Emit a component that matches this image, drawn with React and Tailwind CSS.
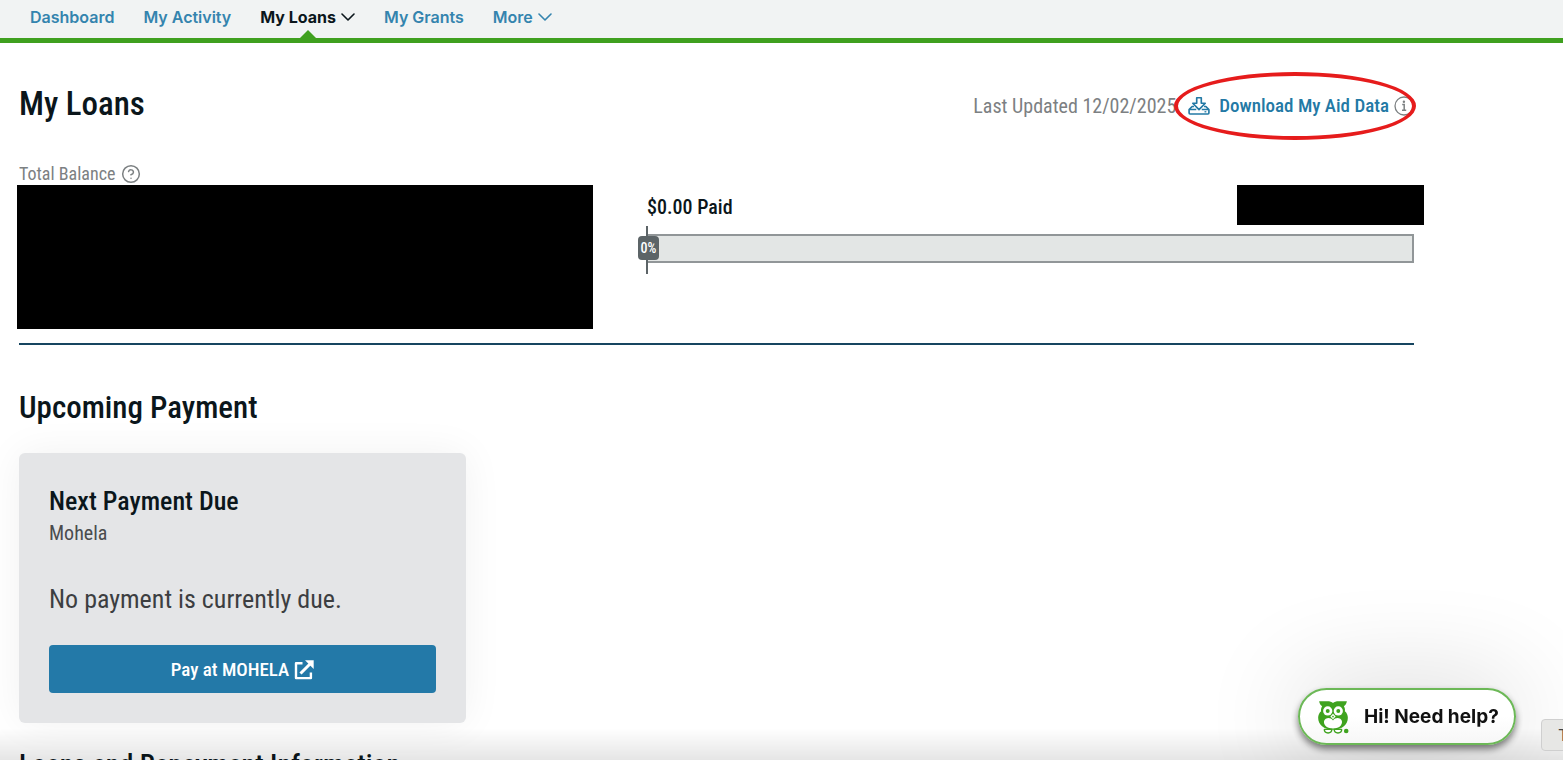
import { CircleHelp } from "lucide-react";
import React from "react";

const navItems = [
  { label: "Dashboard" },
  { label: "My Activity" },
  { label: "My Loans", menu: true, active: true },
  { label: "My Grants" },
  { label: "More", menu: true },
];

const Chevron = () => (
  <svg viewBox="0 0 14 8" className="w-[14px] h-2" fill="none" stroke="currentColor" strokeWidth="1.6" strokeLinecap="round" strokeLinejoin="round" aria-hidden="true">
    <path d="M1 1l6 6 6-6" />
  </svg>
);

const DownloadIcon = () => (
  <svg viewBox="0 0 24 20" className="w-[22px] h-5 shrink-0" fill="none" stroke="currentColor" strokeWidth="1.8" strokeLinejoin="round" aria-hidden="true">
    <path d="M9.5 1h5v6h4.300L12 14 5.200 7h4.300z" />
    <path d="M6.500 10.500H4.500L1.200 14v3.700c0 .6.400 1 1 1h19.600c.6 0 1-.4 1-1V14L19.500 10.500h-2" />
    <path d="M1.500 13.800h7.500M15 13.800h7.500" />
    <path d="M18 16.300h2" strokeWidth="1.400" />
  </svg>
);

const InfoIcon = () => (
  <svg viewBox="0 0 20 20" className="w-5 h-5" fill="none" stroke="currentColor" aria-hidden="true">
    <circle cx="10" cy="10" r="9" strokeWidth="1.300" />
    <path d="M8.200 8.500h2v5.500M8 14.300h4.200" strokeWidth="1.500" />
    <circle cx="9.900" cy="5.800" r="1.200" fill="currentColor" stroke="none" />
  </svg>
);

const ExternalIcon = () => (
  <svg viewBox="0 0 20 20" className="w-5 h-5" fill="none" stroke="currentColor" strokeWidth="2.400" aria-hidden="true">
    <path d="M8.500 3.200H2v14.900h14.900V12.500" strokeLinejoin="round" />
    <path d="M6.500 13.500 16 4" strokeWidth="3" />
    <path d="M11 .3h8.700V9z" fill="currentColor" stroke="none" />
  </svg>
);

const OwlLogo = () => (
  <svg viewBox="0 0 93 100" className="w-[31px] h-[33px] shrink-0" aria-hidden="true">
    <path
      d="M3 1h24c9 0 14 2 18 5 4-3 9-5 18-5h24c-1 7-4 12-9 15 3 5 4 10 3 15 6 5 9 12 9 20 0 21-17 36-45 36S0 72 0 51c0-8 3-15 9-20-1-5 0-10 3-15C7 13 4 8 3 1z"
      fill="#3fa31f"
    />
    <circle cx="29" cy="30" r="14" fill="#fff" />
    <circle cx="61" cy="30" r="14" fill="#fff" />
    <circle cx="29" cy="30" r="6" fill="#3fa31f" />
    <circle cx="61" cy="30" r="6" fill="#3fa31f" />
    <path d="M45 39l8 8-8 8-8-8z" fill="#fff" />
    <path d="M45 44l3 3-3 4-3-4z" fill="#3fa31f" />
    <path d="M45 59c6-8 15-9 22-5 7 5 7 14 1 21-5 6-13 8-23 8s-18-2-23-8c-6-7-6-16 1-21 7-4 16-3 22 5z" fill="#fff" />
    <path d="M19 86h22c1 7-4 11-11 11s-12-4-11-11zM49 86h22c1 7-4 11-11 11s-12-4-11-11z" fill="#fff" stroke="#3fa31f" strokeWidth="4.500" strokeLinejoin="round" />
    <circle cx="85" cy="91" r="7" fill="#3fa31f" />
  </svg>
);

const NavBar = () => (
  <nav className="h-[43px] bg-[#f1f3f3] border-b-5 border-[#3fa01f] pl-[30px] flex gap-[29px] font-['Inter',sans-serif] text-base font-semibold">
    {navItems.map((item) => (
      <a
        key={item.label}
        href="#"
        className={
          item.active
            ? "relative flex items-center h-[34px] gap-[5px] text-[#0b161b] font-bold"
            : "flex items-center h-[34px] gap-[5px] text-[#3484ae]"
        }
      >
        {item.label}
        {item.menu && <Chevron />}
        {item.active && (
          <span className="absolute left-1/2 top-[30px] -translate-x-1/2 border-x-8 border-b-8 border-x-transparent border-b-[#3fa01f]" />
        )}
      </a>
    ))}
  </nav>
);

const PaidProgress = () => (
  <div className="flex-1 pl-[53px]">
    <div className="flex justify-between items-start h-10 -mr-[10px]">
      <p className="pl-px text-xl leading-[44px] font-medium text-[#0b161b]">$0.00 Paid</p>
      <div className="w-[187px] h-10 bg-black" />
    </div>
    <div className="relative mt-[9px] h-[29px] bg-[#e3e6e5] border-2 border-[#919698]">
      <span className="absolute -left-[2px] -top-[10px] w-[2px] h-12 bg-[#5c6467]" />
      <span className="absolute -left-[10px] top-0 w-[21px] h-6 rounded bg-[#5c6467] text-white text-sm leading-6 font-medium text-center">
        0%
      </span>
    </div>
  </div>
);

const HelpButton = () => (
  <button className="fixed right-[47px] bottom-[15px] w-[218px] h-[57px] pl-[18px] pt-[2px] flex items-center gap-[15px] rounded-full border-2 border-[#6cb857] bg-linear-to-b from-white from-50% to-[#f7f7f7] shadow-[0_4px_7px_rgba(0,0,0,0.5),0_0_100px_5px_rgba(0,0,0,0.16)] font-['Inter',sans-serif] text-[19px] font-bold text-[#111] whitespace-nowrap">
    <OwlLogo />
    Hi! Need help?
  </button>
);

const App = () => {
  return (
    <div className="h-screen overflow-hidden bg-white font-['Roboto_Condensed','Roboto',sans-serif] text-[#0b161b]">
      <NavBar />

      <main className="pl-[19px] pr-[149px]">
        <div className="flex items-center justify-between h-[126px]">
          <h1 className="pb-1 text-[33px] leading-10 font-medium">My Loans</h1>
          <div className="flex items-center text-[#7c8082]">
            <span className="text-xl">Last Updated 12/02/2025</span>
            {/* Highlighted download link */}
            <div className="relative flex items-center pl-3">
              <a href="#" className="flex items-center gap-[9px] text-[19px] leading-7 font-medium text-[#2379a5]">
                <DownloadIcon />
                Download My Aid Data
              </a>
              <button className="ml-[5px]" aria-label="About aid data">
                <InfoIcon />
              </button>
              <span className="absolute -inset-x-[2px] -inset-y-5 border-4 border-[#e61c1c] rounded-[50%] pointer-events-none" />
            </div>
          </div>
        </div>

        {/* Balance */}
        <div className="flex items-center gap-[6px] h-4 pb-[6px] text-lg leading-5 text-[#7c8082]">
          Total Balance
          <CircleHelp className="w-5 h-5" strokeWidth={1.800} />
        </div>
        <div className="flex pb-[14px] border-b-2 border-[#164560]">
          <div className="w-[576px] h-36 -ml-[2px] bg-black shrink-0" />
          <PaidProgress />
        </div>

        <h2 className="mt-[43px] text-[31px] leading-10 font-medium">Upcoming Payment</h2>

        <section className="mt-[25px] w-[447px] h-[270px] px-[30px] pt-8 rounded-md bg-[#e4e5e7] shadow-[0_0_40px_rgba(0,0,0,0.06)]">
          <h3 className="text-[26px] leading-8 font-medium">Next Payment Due</h3>
          <p className="text-xl leading-8 text-[#4a4c4e]">Mohela</p>
          <p className="mt-8 text-[26px] leading-9 text-[#3c3e41]">No payment is currently due.</p>
          <button className="mt-7 w-full h-12 pt-[2px] rounded flex items-center justify-center gap-[5px] bg-[#2379a8] text-white text-[19px] font-medium">
            Pay at MOHELA
            <ExternalIcon />
          </button>
        </section>

        <h2 className="mt-[22px] text-[28px] leading-10 font-medium">Loans and Repayment Information</h2>
      </main>

      <div className="fixed inset-x-0 bottom-0 h-8 bg-linear-to-t from-black/10 to-transparent pointer-events-none" />
      <HelpButton />
      <button className="fixed -right-[38px] bottom-[9px] w-[60px] h-8 pl-4 rounded border border-[#cfcfcf] bg-[#e7e7e5] text-left font-['Inter',sans-serif] text-base text-[#444]">
        T
      </button>
    </div>
  );
};

export default App;
